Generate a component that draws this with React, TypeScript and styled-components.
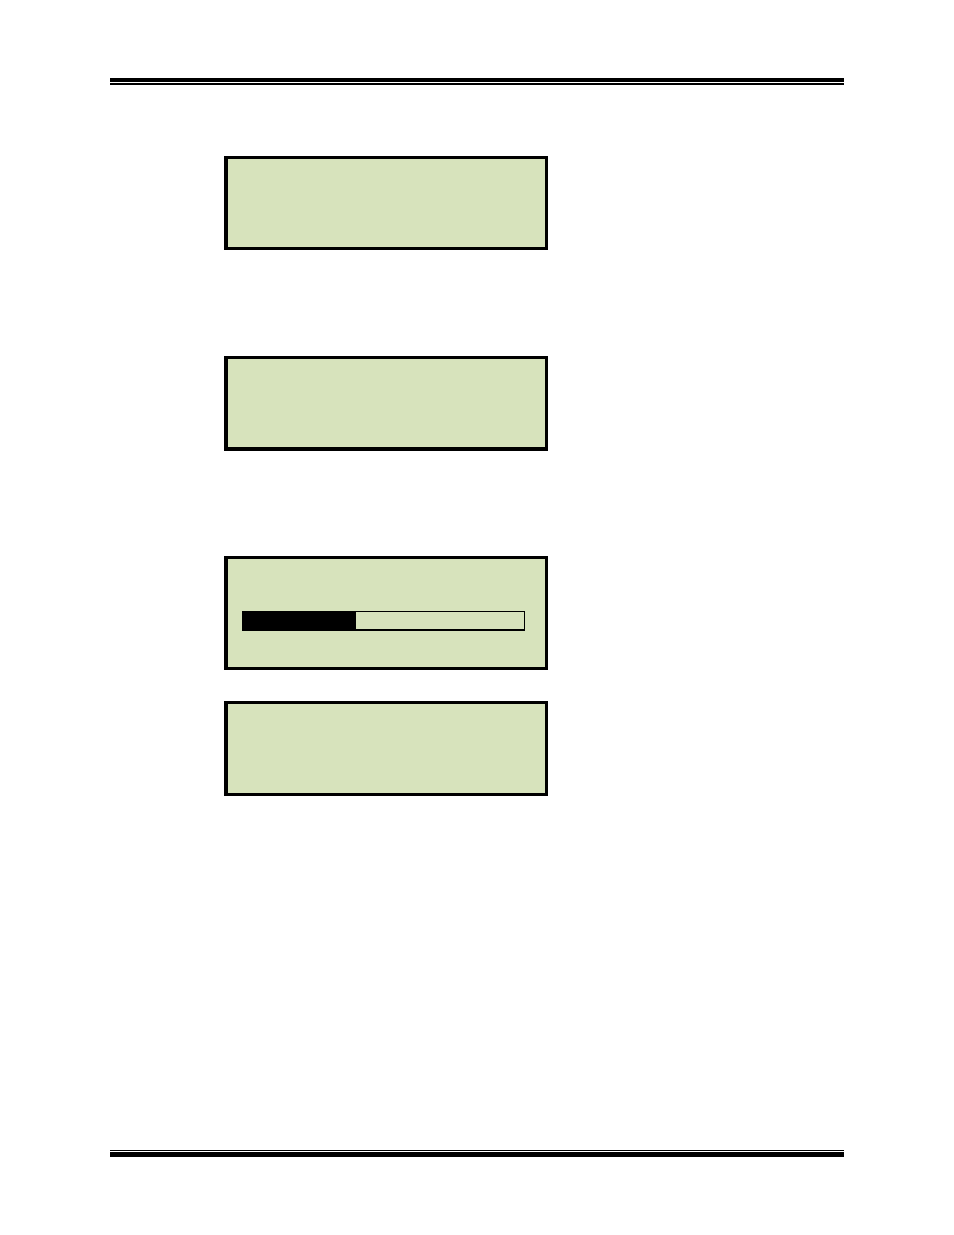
import React from "react";
import styled, { createGlobalStyle } from "styled-components";

const ink = "#000";
const lcd = "#d7e3bc";

const GlobalStyle = createGlobalStyle`
  * { box-sizing: border-box; }
  body {
    margin: 0;
    background: #fff;
    font-family: "Liberation Sans", Arial, sans-serif;
  }
`;

const Page = styled.div`
  display: flex;
  flex-direction: column;
  min-height: 100vh;
  padding: 78px 110px;
`;

const HeaderRule = styled.header`
  height: 7px;
  border-top: 4px solid ${ink};
  border-bottom: 2px solid ${ink};
`;

const FooterRule = styled.footer`
  height: 7px;
  margin-top: auto;
  border-top: 1px solid ${ink};
  border-bottom: 5px solid ${ink};
`;

const Screens = styled.main`
  display: flex;
  flex-direction: column;
  padding: 71px 0 71px 114px;
`;

const Screen = styled.section<{ $height: number; $gap?: number; $base?: number }>`
  width: 100%;
  max-width: 324px;
  min-height: ${({ $height }) => $height}px;
  margin-bottom: ${({ $gap = 0 }) => $gap}px;
  padding: 52px 20px 0 14px;
  background: ${lcd};
  border: 3px solid ${ink};
  border-left-width: 4px;
  border-bottom-width: ${({ $base = 3 }) => $base}px;
`;

const Progress = styled.progress`
  appearance: none;
  display: block;
  width: 100%;
  height: 20px;
  background: ${lcd};
  border: 1px solid ${ink};
  border-bottom-width: 2px;

  &::-webkit-progress-bar {
    background: ${lcd};
  }
  &::-webkit-progress-value {
    background: ${ink};
  }
  &::-moz-progress-bar {
    background: ${ink};
  }
`;

export default function App() {
  return (
    <Page>
      <GlobalStyle />
      <HeaderRule />
      <Screens>
        <Screen $height={94} $gap={106} />
        <Screen $height={95} $gap={105} $base={4} />
        <Screen $height={114} $gap={31}>
          <Progress value={40.2} max={100} aria-label="Progress" />
        </Screen>
        <Screen $height={95} />
      </Screens>
      <FooterRule />
    </Page>
  );
}
